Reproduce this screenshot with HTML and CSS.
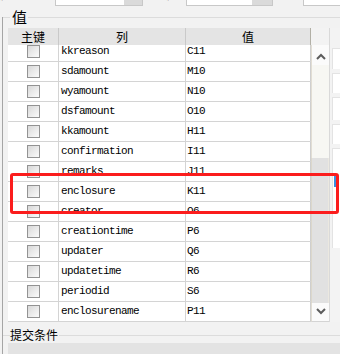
FILE: index.html
```html
<!DOCTYPE html>
<html>
<head>
<meta charset="utf-8">
<link rel="stylesheet" href="styles.css">
</head>
<body>
<div class="topstrip">
  <span class="tlabel l1">数据库</span>
  <span class="tinput i1"><span class="tbtn"></span></span>
  <span class="tlabel l2">数据表</span>
  <span class="tinput i2"><span class="tbtn"></span></span>
  <span class="tlabel l3">表名</span>
  <span class="tinput i3"></span>
</div>
<div class="frame">
  <div class="gtitle"><span>值</span></div>
  <div class="gridwrap">
    <div class="grid">
      <div class="ghead">
        <div class="hc c0">主键</div>
        <div class="hc c1">列</div>
        <div class="hc c2">值</div>
      </div>
      <div class="gbody">
        <div class="rows">
          <div class="row"><div class="cell c0"><span class="chk"></span></div><div class="cell c1">kkreason</div><div class="cell c2">C11</div></div>
          <div class="row"><div class="cell c0"><span class="chk"></span></div><div class="cell c1">sdamount</div><div class="cell c2">M10</div></div>
          <div class="row"><div class="cell c0"><span class="chk"></span></div><div class="cell c1">wyamount</div><div class="cell c2">N10</div></div>
          <div class="row"><div class="cell c0"><span class="chk"></span></div><div class="cell c1">dsfamount</div><div class="cell c2">O10</div></div>
          <div class="row"><div class="cell c0"><span class="chk"></span></div><div class="cell c1">kkamount</div><div class="cell c2">H11</div></div>
          <div class="row"><div class="cell c0"><span class="chk"></span></div><div class="cell c1">confirmation</div><div class="cell c2">I11</div></div>
          <div class="row"><div class="cell c0"><span class="chk"></span></div><div class="cell c1">remarks</div><div class="cell c2">J11</div></div>
          <div class="row"><div class="cell c0"><span class="chk"></span></div><div class="cell c1">enclosure</div><div class="cell c2">K11</div></div>
          <div class="row"><div class="cell c0"><span class="chk"></span></div><div class="cell c1">creator</div><div class="cell c2">O6</div></div>
          <div class="row"><div class="cell c0"><span class="chk"></span></div><div class="cell c1">creationtime</div><div class="cell c2">P6</div></div>
          <div class="row"><div class="cell c0"><span class="chk"></span></div><div class="cell c1">updater</div><div class="cell c2">Q6</div></div>
          <div class="row"><div class="cell c0"><span class="chk"></span></div><div class="cell c1">updatetime</div><div class="cell c2">R6</div></div>
          <div class="row"><div class="cell c0"><span class="chk"></span></div><div class="cell c1">periodid</div><div class="cell c2">S6</div></div>
          <div class="row"><div class="cell c0"><span class="chk"></span></div><div class="cell c1">enclosurename</div><div class="cell c2">P11</div></div>
        </div>
      </div>
    </div>
    <div class="vscroll">
      <div class="vs-top"></div>
      <div class="vs-btn vs-up"><svg width="10" height="7" viewBox="0 0 10 7"><polyline points="1,6 5,2 9,6" fill="none" stroke="#5c5c5c" stroke-width="2"/></svg></div>
      <div class="vs-track"></div>
      <div class="vs-thumb"></div>
      <div class="vs-btn vs-down"><svg width="10" height="7" viewBox="0 0 10 7"><polyline points="1,1 5,5 9,1" fill="none" stroke="#5c5c5c" stroke-width="2"/></svg></div>
    </div>
    <div class="side">
      <div class="sbox b1"></div>
      <div class="sbox b2"></div>
      <div class="sbox b3"></div>
      <div class="sbox b4"></div>
      <div class="sbox b5"><span class="blue"></span></div>
    </div>
  </div>
  <div class="gtitle t2"><span>提交条件</span></div>
  <div class="band"></div>
</div>
<div class="highlight"></div>
</body>
</html>
```
FILE: styles.css
```css
* { box-sizing: border-box; margin: 0; padding: 0; }
html, body { width: 340px; height: 354px; overflow: hidden; }
body {
  background: #f2f2f2;
  font-family: "Noto Sans CJK SC", sans-serif;
  color: #000;
  position: relative;
}

/* top strip (cut-off controls) */
.topstrip { display: flex; align-items: flex-end; height: 6px; overflow: hidden; }
.topstrip > * { flex: none; height: 20px; }
.tlabel { font-size: 12px; line-height: 16px; white-space: nowrap; overflow: hidden; }
.l1 { margin-left: -16px; width: 71px; }
.l2 { margin-left: 7px; width: 36px; }
.l3 { margin-left: 7px; width: 23px; }
.tinput { display: flex; background: #fff; border: 1px solid #c8c8c8; }
.i1 { width: 88px; }
.i2 { width: 87px; }
.i3 { width: 40px; }
.tbtn { margin-left: auto; width: 18px; height: 100%; background: #dadada; }
.i2 .tbtn { width: 20px; }

/* group frame */
.frame {
  height: 348px;
  background: linear-gradient(#a5a5a5, #a5a5a5) no-repeat 2px 11px / 1px calc(100% - 11px);
}
.gtitle { display: flex; align-items: center; height: 22px; padding-left: 3px; }
.gtitle::before { content: ""; width: 7px; height: 1px; background: #dcdcdc; }
.gtitle::after { content: ""; flex: 1; height: 1px; background: #dcdcdc; }
.gtitle span { font-size: 15px; line-height: 22px; padding: 0 1px 0 2px; }
.gtitle.t2 { height: 16px; margin-top: 5px; }
.gtitle.t2 span { font-size: 12px; line-height: 16px; padding: 0 1px 0 0; }

.gridwrap { display: flex; height: 294px; padding-left: 8px; }

/* grid */
.grid { width: 303px; flex: none; display: flex; flex-direction: column; }
.ghead { display: flex; height: 17px; background: #e4e4e4; }
.hc { font-size: 12px; line-height: 17px; text-align: center; border-right: 1px solid #c9c9c9; }
.c0 { width: 51px; flex: none; }
.c1 { width: 127px; flex: none; }
.c2 { width: 125px; flex: none; }
.ghead .c2 { border-right-color: #b2b0a6; }
.gbody { height: 277px; overflow: hidden; background: #fff; }
.rows { margin-top: -3px; }
.row { display: flex; height: 20px; border-bottom: 1px solid #d4d4d4; }
.cell { border-right: 1px solid #d4d4d4; }
.row .c2 { border-right-color: #cfcfcf; }
.row .c1, .row .c2 {
  font-family: "Liberation Mono", monospace;
  font-size: 11px;
  letter-spacing: -0.6px;
  line-height: 19px;
  padding-left: 2px;
  white-space: nowrap;
}
.row .c2 { padding-left: 1px; }
.row .c0 { display: flex; align-items: center; justify-content: center; padding-left: 1px; }
.chk {
  display: block;
  width: 13px;
  height: 13px;
  border: 1px solid #939393;
  background: linear-gradient(135deg, #d8d8d8 0%, #ececec 55%, #fafafa 100%);
}

/* scrollbar */
.vscroll {
  width: 19px; flex: none; display: flex; flex-direction: column;
  border-right: 1px solid #d9d9d9;
}
.vs-top { height: 17px; background: #f3f3f3; }
.vs-btn { display: flex; align-items: center; justify-content: center; background: #fbfbfb; border-left: 1px solid #e2ded4; }
.vs-up { height: 20px; padding-top: 3px; }
.vs-down { height: 19px; padding-bottom: 1px; border-bottom: 1px solid #d4d4d4; }
.vs-track { height: 93px; background: #f7f7f3; border-left: 1px solid #e2ded4; }
.vs-thumb { height: 145px; background: #e1e1e1; border-left: 1px solid #dcd8cc; border-right: 1px solid #ebe8e0; }

/* side panel (other control behind) */
.side { flex: 1; display: flex; flex-direction: column; gap: 4px; padding: 20px 0 0 2px; background: #f3f3f3; }
.sbox { background: #fff; border-top: 1px solid #e3e3e3; border-left: 1px solid #e3e3e3; }
.b1 { height: 21px; }
.b2 { height: 20px; }
.b3 { height: 23px; }
.b4 { height: 20px; }
.b5 { height: 100px; padding: 25px 0 0 1px; }
.blue { display: block; width: 3px; height: 13px; background: #3c8fe0; }

.band { height: 11px; margin-left: 8px; background: #e3e3e3; }

/* red annotation */
.highlight {
  position: absolute;
  left: 10px; top: 173px;
  width: 329px; height: 41px;
  border: 3px solid #fb1d1d;
  border-radius: 3px;
}
```
